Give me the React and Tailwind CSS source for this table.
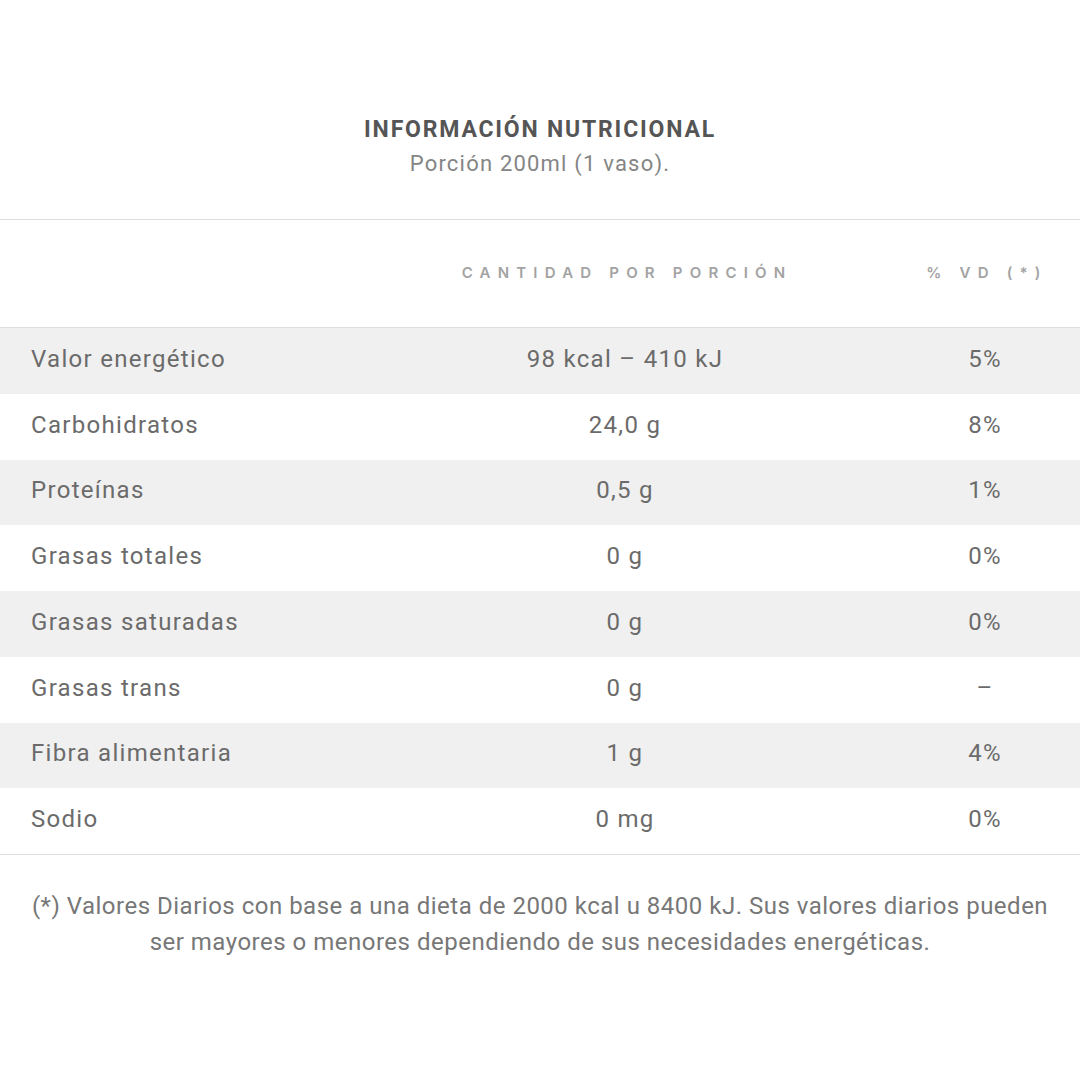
const ROWS = [
  { name: 'Valor energético', qty: '98 kcal – 410 kJ', vd: '5%' },
  { name: 'Carbohidratos', qty: '24,0 g', vd: '8%' },
  { name: 'Proteínas', qty: '0,5 g', vd: '1%' },
  { name: 'Grasas totales', qty: '0 g', vd: '0%' },
  { name: 'Grasas saturadas', qty: '0 g', vd: '0%' },
  { name: 'Grasas trans', qty: '0 g', vd: '–' },
  { name: 'Fibra alimentaria', qty: '1 g', vd: '4%' },
  { name: 'Sodio', qty: '0 mg', vd: '0%' },
];

export default function App() {
  return (
    <div className="w-[1080px] h-[1080px] bg-white flex flex-col font-['Roboto',sans-serif] text-[#6b6b6b]">
      {/* Title */}
      <div className="pt-[115px] pb-[40px] flex flex-col items-center">
        <h1 className="text-[23px] leading-[30px] font-bold tracking-[1.8px] text-[#555555]">INFORMACIÓN NUTRICIONAL</h1>
        <p className="text-[22px] leading-[30px] tracking-[1.2px] text-[#858585] mt-[4px]">Porción 200ml (1 vaso).</p>
      </div>

      {/* Table */}
      <div className="border-t border-b border-[#dddddd]">
        <div className="flex items-center h-[108px] border-b border-[#dddddd] text-[15px] font-semibold tracking-[7.2px] text-[#a3a3a3] font-['Inter',sans-serif]">
          <div className="w-[450px]" />
          <div className="w-[350px] text-center pl-[4px]">CANTIDAD POR PORCIÓN</div>
          <div className="flex-1" />
          <div className="w-[190px] text-center pl-[4px]">% VD (*)</div>
        </div>
        {ROWS.map((r, i) => (
          <div
            key={r.name}
            className={`flex items-center h-[65.75px] pb-[4px] text-[24px] tracking-[1.3px] ${i % 2 === 0 ? 'bg-[#f0f0f0]' : 'bg-white'}`}
          >
            <div className="w-[450px] pl-[31px]">{r.name}</div>
            <div className="w-[350px] text-center">{r.qty}</div>
            <div className="flex-1" />
            <div className="w-[190px] text-center">{r.vd}</div>
          </div>
        ))}
      </div>

      {/* Footnote */}
      <p className="mt-[33px] px-[10px] text-center text-[24px] leading-[36px] tracking-[0.5px] text-[#777777]">
        (*) Valores Diarios con base a una dieta de 2000 kcal u 8400 kJ. Sus valores diarios pueden
        <br />
        ser mayores o menores dependiendo de sus necesidades energéticas.
      </p>
    </div>
  );
}
